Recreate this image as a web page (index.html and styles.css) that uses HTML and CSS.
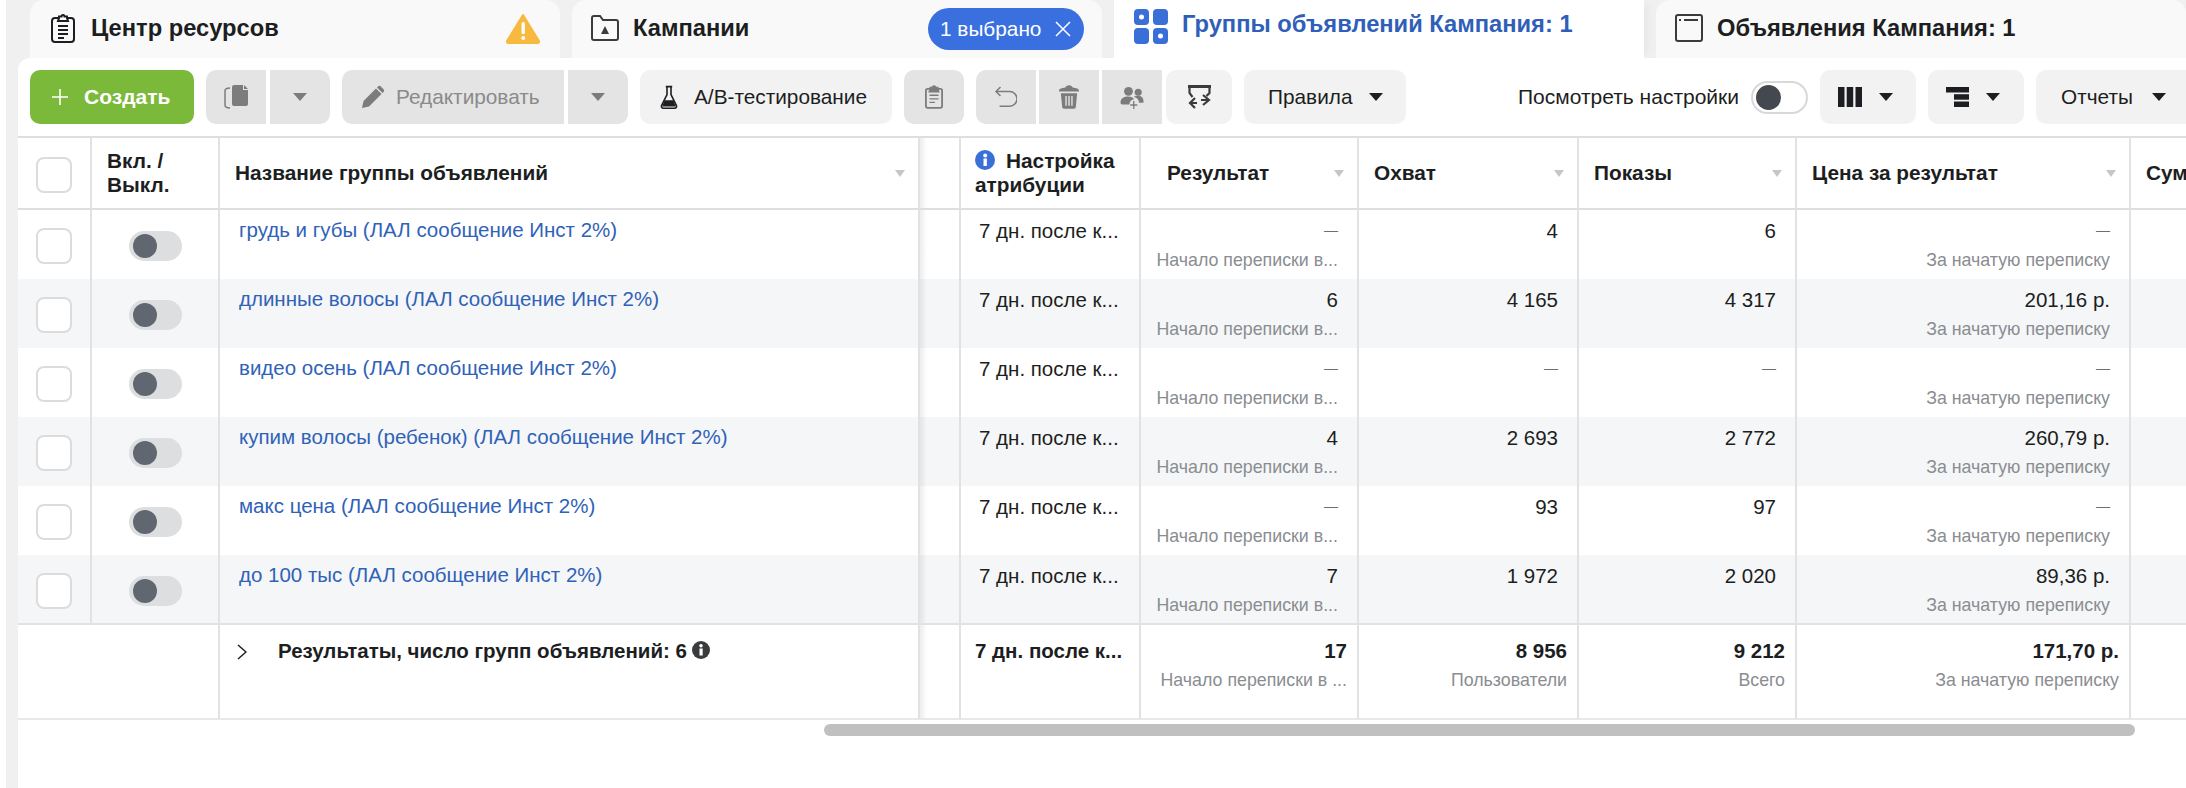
FILE: index.html
```html
<!DOCTYPE html>
<html lang="en">
<head>
    <meta charset="UTF-8">
    <title>Группы объявлений</title>
    <link rel="stylesheet" href="styles.css">
</head>
<body>
<div class="page">
    <div class="tabs">
        <div class="tab first">
            <svg class="tab-icon" width="24" height="30" viewBox="0 0 24 30" fill="none" stroke="#1c1e21" stroke-width="2"><rect x="1" y="5" width="22" height="24" rx="3"/><path d="M8 5V3.500h2.500a1.500 1.500 0 0 1 3 0H16V5l1 3H7z" fill="#fff"/><path d="M7 13h10M7 17h10M7 21h10M7 25h6" stroke-width="2"/></svg>
            <span class="tab-title">Центр ресурсов</span>
            <svg class="tab-end" width="36" height="31" viewBox="0 0 36 31"><path d="M18 2L34 28a1.500 1.500 0 0 1-1 2H3a1.500 1.500 0 0 1-1-2z" fill="#f7b93e" stroke="#f7b93e" stroke-width="2" stroke-linejoin="round"/><rect x="16.500" y="9" width="3.400" height="12" rx="1.500" fill="#fff"/><circle cx="18.200" cy="25" r="2" fill="#fff"/></svg>
        </div>
        <div class="tab">
            <svg class="tab-icon" width="28" height="26" viewBox="0 0 28 26" fill="none" stroke="#3a3b3c" stroke-width="2"><path d="M1 3a2 2 0 0 1 2-2h6l3 4h13a2 2 0 0 1 2 2v16a2 2 0 0 1-2 2H3a2 2 0 0 1-2-2z"/><path d="M14 11l4 8h-8z" fill="#3a3b3c" stroke="none"/></svg>
            <span class="tab-title">Кампании</span>
            <span class="pill tab-end">1 выбрано<svg width="16" height="16" viewBox="0 0 16 16" stroke="#fff" stroke-width="1.500"><path d="M1 1l14 14M15 1L1 15"/></svg></span>
        </div>
        <div class="tab active">
            <svg class="tab-icon" width="34" height="35" viewBox="0 0 34 35"><rect width="15" height="16" rx="4" fill="#3a6fd8"/><rect x="19" width="15" height="16" rx="4" fill="#3a6fd8"/><rect y="19" width="15" height="16" rx="4" fill="#3a6fd8"/><rect x="19" y="19" width="15" height="16" rx="4" fill="#3a6fd8"/><circle cx="7.500" cy="8" r="2.500" fill="#fff"/><circle cx="26.500" cy="27" r="2.500" fill="#fff"/></svg>
            <span class="tab-title">Группы объявлений Кампания: 1</span>
        </div>
        <div class="tab">
            <svg class="tab-icon" width="28" height="28" viewBox="0 0 28 28" fill="none" stroke="#3a3b3c" stroke-width="2"><rect x="1" y="1" width="26" height="26" rx="2"/><path d="M9 6h14M4 6h2"/></svg>
            <span class="tab-title">Объявления Кампания: 1</span>
        </div>
    </div>

    <div class="card">
        <div class="toolbar">
            <button class="btn create"><svg width="16" height="16" viewBox="0 0 16 16" stroke="#fff" stroke-width="1.600"><path d="M8 0v16M0 8h16"/></svg>Создать</button>
            <div class="group">
                <button class="btn off square"><svg width="24" height="24" viewBox="0 0 24 24" fill="#7c7c7c"><path d="M10 0h9v5h5v14a2 2 0 0 1-2 2H10a2 2 0 0 1-2-2V2a2 2 0 0 1 2-2z"/><path d="M20 0l4 4h-4z"/><path d="M6 3C2 3 1 4 1 6v14c0 2 1 3 5 3" fill="none" stroke="#7c7c7c" stroke-width="1.500"/></svg></button>
                <button class="btn off square"><span class="caret"></span></button>
            </div>
            <div class="group">
                <button class="btn off edit"><svg width="24" height="24" viewBox="0 0 24 24" fill="#7c7c7c"><path d="M1 23l1.500-7L15 3.500l5.500 5.500L8 21.500z"/><path d="M17 1.500a2 2 0 0 1 2.800 0l2.700 2.700a2 2 0 0 1 0 2.800L21.500 8 16 2.500z"/></svg>Редактировать</button>
                <button class="btn off square"><span class="caret"></span></button>
            </div>
            <button class="btn ab"><svg width="18" height="24" viewBox="0 0 22 30"><path d="M7 2h8M8.500 2v10L2 25a2.500 2.500 0 0 0 2 4h14a2.500 2.500 0 0 0 2-4l-6.500-13V2" fill="none" stroke="#1c1e21" stroke-width="2"/><path d="M5.500 19h11l3 8H2.500z" fill="#1c1e21"/></svg>A/B-тестирование</button>
            <button class="btn off square"><svg width="18" height="24" viewBox="0 0 20 26" fill="none" stroke="#7c7c7c" stroke-width="2"><rect x="1" y="4" width="18" height="21" rx="2"/><path d="M6 4V2.500h2.500a1.500 1.500 0 0 1 3 0H14V4l1 3H5z" fill="#7c7c7c"/><path d="M5 11h10M5 15h10M5 19h6" stroke-width="1.500"/></svg></button>
            <div class="group tight">
                <button class="btn off square"><svg width="22" height="22" viewBox="0 0 24 24" fill="none" stroke="#7c7c7c" stroke-width="1.600"><path d="M6 1L1 6l5 5"/><path d="M1 6h15a7 7 0 0 1 0 16H5"/></svg></button>
                <button class="btn off square"><svg width="20" height="24" viewBox="0 0 22 26" fill="#7c7c7c"><path d="M0 6c0-2 3-3 7-3.500C7.500 1 9 0 11 0s3.500 1 4 2.500C19 3 22 4 22 6v1H0z"/><path d="M2 9h18l-1.500 15a2 2 0 0 1-2 2h-11a2 2 0 0 1-2-2zM7 12v10.500h1.500V12zM10.200 12v10.500h1.600V12zM13.500 12v10.500H15V12z" fill-rule="evenodd"/></svg></button>
                <button class="btn off square"><svg width="24" height="23" viewBox="0 0 26 26" fill="#7c7c7c"><circle cx="9" cy="6" r="5"/><circle cx="20" cy="7" r="4"/><path d="M0 19c0-5 4-7 9-7 3 0 5 1 6.500 3A6.500 6.500 0 0 0 10 21H2a2 2 0 0 1-2-2z"/><path d="M15 12.500c1.500-1.500 3-1.500 5-1.500 3 0 6 2 6 6v2h-5a6.500 6.500 0 0 0-6-6.500z"/><path d="M15 17v9M11 21.500h8" stroke="#7c7c7c" stroke-width="1.500" fill="none"/></svg></button>
            </div>
            <button class="btn swap"><svg width="23" height="25" viewBox="0 0 23 25" fill="none" stroke="#3a3b3c" stroke-width="2.200"><path d="M0 1.500h23" stroke-width="3"/><path d="M1.500 2v6l3 4M21.500 2v6l-3 3"/><path d="M7 13l-5 5 5 5M2 18h7M15 10l6 5-6 5M21 15h-8"/></svg></button>
            <button class="btn rules">Правила<span class="caret dark"></span></button>
            <div class="view">
                <span>Посмотреть настройки</span>
                <span class="switch"><span class="knob"></span></span>
            </div>
            <button class="btn icon-drop"><svg width="24" height="20" viewBox="0 0 24 20" fill="#1c1e21"><rect width="6.500" height="20"/><rect x="8.700" width="6.500" height="20"/><rect x="17.500" width="6.500" height="20"/></svg><span class="caret dark"></span></button>
            <button class="btn icon-drop"><svg width="23" height="20" viewBox="0 0 23 20" fill="#1c1e21"><rect width="23" height="5.500"/><rect x="8" y="7.200" width="15" height="5.500"/><rect x="8" y="14.500" width="15" height="5.500"/></svg><span class="caret dark"></span></button>
            <button class="btn reports">Отчеты<span class="caret dark"></span></button>
        </div>

        <div class="table-wrap">
            <table class="grid">
                <colgroup>
                    <col class="c-check"><col class="c-toggle"><col class="c-name"><col class="c-gap"><col class="c-attr">
                    <col class="c-result"><col class="c-reach"><col class="c-shows"><col class="c-price"><col class="c-sum">
                </colgroup>
                <thead>
                    <tr>
                        <th class="center"><span class="check"></span></th>
                        <th>Вкл. /<br>Выкл.</th>
                        <th class="with-sort"><div class="th-in">Название группы объявлений<span class="sort"></span></div></th>
                        <th class="gap"></th>
                        <th class="attr-head"><svg class="info" width="20" height="20" viewBox="0 0 20 20"><circle cx="10" cy="10" r="10" fill="#3a6fd8"/><rect x="8.500" y="8.500" width="3.400" height="7.500" fill="#fff"/><circle cx="10.200" cy="5.500" r="2" fill="#fff"/></svg>Настройка<br>атрибуции</th>
                        <th class="with-sort first-metric"><div class="th-in">Результат<span class="sort"></span></div></th>
                        <th class="with-sort"><div class="th-in">Охват<span class="sort"></span></div></th>
                        <th class="with-sort"><div class="th-in">Показы<span class="sort"></span></div></th>
                        <th class="with-sort"><div class="th-in">Цена за результат<span class="sort"></span></div></th>
                        <th>Сумма</th>
                    </tr>
                </thead>
                <tbody>
                    <tr>
                        <td class="center"><span class="check"></span></td>
                        <td class="center"><span class="toggle"><span class="dot"></span></span></td>
                        <td class="name"><a href="#">грудь и губы (ЛАЛ сообщение Инст 2%)</a></td>
                        <td class="gap"></td>
                        <td class="attr">7 дн. после к...</td>
                        <td class="num"><span class="none">—</span><div class="sub">Начало переписки в...</div></td>
                        <td class="num">4</td>
                        <td class="num">6</td>
                        <td class="num"><span class="none">—</span><div class="sub">За начатую переписку</div></td>
                        <td></td>
                    </tr>
                    <tr>
                        <td class="center"><span class="check"></span></td>
                        <td class="center"><span class="toggle"><span class="dot"></span></span></td>
                        <td class="name"><a href="#">длинные волосы (ЛАЛ сообщение Инст 2%)</a></td>
                        <td class="gap"></td>
                        <td class="attr">7 дн. после к...</td>
                        <td class="num">6<div class="sub">Начало переписки в...</div></td>
                        <td class="num">4 165</td>
                        <td class="num">4 317</td>
                        <td class="num">201,16 р.<div class="sub">За начатую переписку</div></td>
                        <td></td>
                    </tr>
                    <tr>
                        <td class="center"><span class="check"></span></td>
                        <td class="center"><span class="toggle"><span class="dot"></span></span></td>
                        <td class="name"><a href="#">видео осень (ЛАЛ сообщение Инст 2%)</a></td>
                        <td class="gap"></td>
                        <td class="attr">7 дн. после к...</td>
                        <td class="num"><span class="none">—</span><div class="sub">Начало переписки в...</div></td>
                        <td class="num"><span class="none">—</span></td>
                        <td class="num"><span class="none">—</span></td>
                        <td class="num"><span class="none">—</span><div class="sub">За начатую переписку</div></td>
                        <td></td>
                    </tr>
                    <tr>
                        <td class="center"><span class="check"></span></td>
                        <td class="center"><span class="toggle"><span class="dot"></span></span></td>
                        <td class="name"><a href="#">купим волосы (ребенок) (ЛАЛ сообщение Инст 2%)</a></td>
                        <td class="gap"></td>
                        <td class="attr">7 дн. после к...</td>
                        <td class="num">4<div class="sub">Начало переписки в...</div></td>
                        <td class="num">2 693</td>
                        <td class="num">2 772</td>
                        <td class="num">260,79 р.<div class="sub">За начатую переписку</div></td>
                        <td></td>
                    </tr>
                    <tr>
                        <td class="center"><span class="check"></span></td>
                        <td class="center"><span class="toggle"><span class="dot"></span></span></td>
                        <td class="name"><a href="#">макс цена (ЛАЛ сообщение Инст 2%)</a></td>
                        <td class="gap"></td>
                        <td class="attr">7 дн. после к...</td>
                        <td class="num"><span class="none">—</span><div class="sub">Начало переписки в...</div></td>
                        <td class="num">93</td>
                        <td class="num">97</td>
                        <td class="num"><span class="none">—</span><div class="sub">За начатую переписку</div></td>
                        <td></td>
                    </tr>
                    <tr>
                        <td class="center"><span class="check"></span></td>
                        <td class="center"><span class="toggle"><span class="dot"></span></span></td>
                        <td class="name"><a href="#">до 100 тыс (ЛАЛ сообщение Инст 2%)</a></td>
                        <td class="gap"></td>
                        <td class="attr">7 дн. после к...</td>
                        <td class="num">7<div class="sub">Начало переписки в...</div></td>
                        <td class="num">1 972</td>
                        <td class="num">2 020</td>
                        <td class="num">89,36 р.<div class="sub">За начатую переписку</div></td>
                        <td></td>
                    </tr>
                </tbody>
                <tfoot>
                    <tr>
                        <td colspan="2"></td>
                        <td class="total-name">
                            <svg class="chevron" width="10" height="16" viewBox="0 0 10 16" fill="none" stroke="#1c1e21" stroke-width="1.500"><path d="M1 1l8 7-8 7"/></svg>Результаты, число групп объявлений: 6<svg class="info-dark" width="18" height="18" viewBox="0 0 18 18"><circle cx="9" cy="9" r="9" fill="#3a3b3c"/><rect x="7.500" y="7.500" width="3.200" height="7" fill="#fff"/><circle cx="9" cy="4.800" r="1.800" fill="#fff"/></svg>
                        </td>
                        <td class="gap"></td>
                        <td class="attr total-attr">7 дн. после к...</td>
                        <td class="num">17<div class="sub">Начало переписки в ...</div></td>
                        <td class="num">8 956<div class="sub">Пользователи</div></td>
                        <td class="num">9 212<div class="sub">Всего</div></td>
                        <td class="num">171,70 р.<div class="sub">За начатую переписку</div></td>
                        <td></td>
                    </tr>
                </tfoot>
            </table>
        </div>
        <div class="scrollbar"></div>
    </div>
</div>
</body>
</html>
```

FILE: styles.css
```css
*{
    margin: 0;
    padding: 0;
    box-sizing: border-box;
    font-family: "Liberation Sans", Arial, sans-serif;
}

body{
    background: #fff;
    color: #1c1e21;
    overflow: hidden;
}

.page{
    margin-left: 6px;
    min-height: 788px;
    background: #f0f0f0;
    overflow: hidden;
}

/* tabs */
.tabs{
    display: flex;
    gap: 12px;
    height: 58px;
    padding-left: 24px;
}

.tab{
    flex: none;
    width: 530px;
    height: 58px;
    display: flex;
    align-items: center;
    padding: 0 19px 2px;
    background: #f9f9f9;
    border-radius: 14px 14px 0 0;
}

.tab.first{
    padding-left: 21px;
}

.tab-icon{
    flex: none;
    margin-right: 14px;
}

.first .tab-icon{
    margin-right: 16px;
}

.tab-title{
    font-size: 23.700px;
    font-weight: 700;
    white-space: nowrap;
}

.tab-end{
    margin-left: auto;
}

.tab.active{
    background: #fff;
    border-radius: 0;
    align-items: flex-start;
    padding: 9px 0 0 20px;
    box-shadow: 8px 0 8px -4px rgba(0, 0, 0, 0.04);
    position: relative;
}

.tab.active .tab-title{
    color: #2f5fb8;
    padding-top: 2px;
}

.pill{
    display: flex;
    align-items: center;
    gap: 14px;
    width: 156px;
    height: 42px;
    margin-top: 2px;
    margin-right: -1px;
    padding-left: 12px;
    border-radius: 21px;
    background: #3a6fe0;
    color: #fff;
    font-size: 20.800px;
    white-space: nowrap;
}

/* card */
.card{
    margin-left: 12px;
    min-height: 730px;
    background: #fff;
    border-radius: 12px 0 0 0;
}

.toolbar{
    display: flex;
    align-items: center;
    height: 78px;
    padding-left: 12px;
    gap: 12px;
    overflow: hidden;
}

.group{
    display: flex;
    gap: 4px;
}

.group.tight{
    gap: 3px;
}

.btn{
    flex: none;
    height: 54px;
    display: flex;
    align-items: center;
    justify-content: center;
    border: 0;
    border-radius: 10px;
    background: #f2f2f2;
    color: #1c1e21;
    font-size: 20.800px;
}

.group .btn:first-child{
    border-radius: 10px 0 0 10px;
}

.group .btn:last-child{
    border-radius: 0 10px 10px 0;
}

.group.tight .btn{
    border-radius: 0;
}

.group.tight .btn:first-child{
    border-radius: 10px 0 0 10px;
}

.btn.off{
    background: #e4e4e4;
    color: #8a8a8a;
}

.square{
    width: 60px;
}

.create{
    width: 164px;
    justify-content: flex-start;
    padding-left: 22px;
    gap: 16px;
    background: #7ab93a;
    color: #fff;
    font-size: 21px;
    font-weight: 700;
}

.edit{
    width: 222px;
    justify-content: flex-start;
    padding-left: 19px;
    gap: 11px;
}

.ab{
    width: 252px;
    justify-content: flex-start;
    padding-left: 20px;
    gap: 16px;
}

.swap{
    width: 66px;
    margin-left: -8px;
}

.rules{
    width: 162px;
    justify-content: flex-start;
    padding-left: 24px;
    gap: 17px;
}

.icon-drop{
    width: 96px;
    justify-content: flex-start;
    padding-left: 18px;
    gap: 17px;
}

.reports{
    width: 170px;
    justify-content: flex-start;
    padding-left: 25px;
    gap: 19px;
}

.caret{
    display: inline-block;
    border-left: 7px solid transparent;
    border-right: 7px solid transparent;
    border-top: 8px solid #7c7c7c;
}

.caret.dark{
    border-top-color: #1c1e21;
}

.view{
    margin-left: 100px;
    display: flex;
    align-items: center;
    gap: 12px;
    font-size: 21px;
    white-space: nowrap;
}

.switch{
    display: block;
    width: 57px;
    height: 33px;
    border: 2px solid #d8d8d8;
    border-radius: 17px;
    padding: 2px 3px;
}

.knob{
    display: block;
    width: 25px;
    height: 25px;
    border-radius: 50%;
    background: #444950;
}

/* table */
.table-wrap{
    overflow: hidden;
}

.grid{
    table-layout: fixed;
    border-collapse: separate;
    border-spacing: 0;
    width: 2432px;
}

.c-check{ width: 74px; }
.c-toggle{ width: 128px; }
.c-name{ width: 700px; }
.c-gap{ width: 41px; }
.c-attr{ width: 180px; }
.c-result{ width: 218px; }
.c-reach{ width: 220px; }
.c-shows{ width: 218px; }
.c-price{ width: 334px; }
.c-sum{ width: 319px; }

th{
    height: 74px;
    border-top: 2px solid #dedede;
    border-bottom: 2px solid #dedede;
    border-right: 2px solid #e2e2e2;
    padding: 0 13px 0 15px;
    font-size: 20.800px;
    line-height: 24px;
    font-weight: 700;
    text-align: left;
    white-space: nowrap;
}

.th-in{
    display: flex;
    align-items: center;
    justify-content: space-between;
}

.sort{
    flex: none;
    border-left: 5px solid transparent;
    border-right: 5px solid transparent;
    border-top: 7px solid #c6c6c6;
}

.first-metric{
    padding-left: 26px;
}

.attr-head{
    padding-left: 14px;
}

.info{
    vertical-align: -2px;
    margin-right: 11px;
}

td{
    height: 69px;
    border-right: 2px solid #e2e2e2;
    vertical-align: top;
    font-size: 20.500px;
    line-height: 22px;
    white-space: nowrap;
}

tbody tr:nth-child(even){
    background: #f5f6f7;
}

tbody tr:last-child td{
    height: 70px;
    border-bottom: 2px solid #e2e2e2;
}

th.center, td.center{
    padding: 0;
    text-align: center;
}

th.center{
    vertical-align: middle;
}

.check{
    display: block;
    width: 36px;
    height: 36px;
    margin: 18px 0 0 18px;
    background: #fff;
    border: 2px solid #dcdcdc;
    border-radius: 8px;
}

th .check{
    margin-top: 3px;
}

.toggle{
    display: block;
    width: 53px;
    height: 30px;
    margin: 21px 0 0 37px;
    padding: 3px 4px;
    border-radius: 15px;
    background: #dcdee0;
}

.dot{
    display: block;
    width: 24px;
    height: 24px;
    border-radius: 50%;
    background: #606770;
}

.name{
    padding: 9px 0 0 19px;
}

.name a{
    color: #3062b8;
    text-decoration: none;
}

.gap{
    padding: 0;
    background: linear-gradient(90deg, rgba(0, 0, 0, 0.07), rgba(0, 0, 0, 0) 7px);
}

.attr{
    padding: 10px 0 0 18px;
}

.num{
    padding: 10px 19px 0 0;
    text-align: right;
}

.none{
    display: block;
    height: 22px;
    font-size: 14px;
    line-height: 20px;
    color: #6b6f75;
}

.sub{
    margin-top: 8px;
    font-size: 17.800px;
    line-height: 20px;
    color: #8a8d91;
}

tfoot td{
    height: 95px;
    border-bottom: 2px solid #e8e8e8;
    font-weight: 700;
}

tfoot .sub{
    font-weight: 400;
}

tfoot .num{
    padding: 15px 10px 0 0;
}

.total-name{
    padding: 15px 0 0 17px;
}

.chevron{
    vertical-align: -2px;
    margin-right: 31px;
}

.info-dark{
    vertical-align: -1px;
    margin-left: 5px;
}

.total-attr{
    padding: 15px 0 0 14px;
}

.scrollbar{
    width: 1311px;
    height: 12px;
    margin: 4px 0 0 806px;
    border-radius: 6px;
    background: #c0c0c0;
}
```
